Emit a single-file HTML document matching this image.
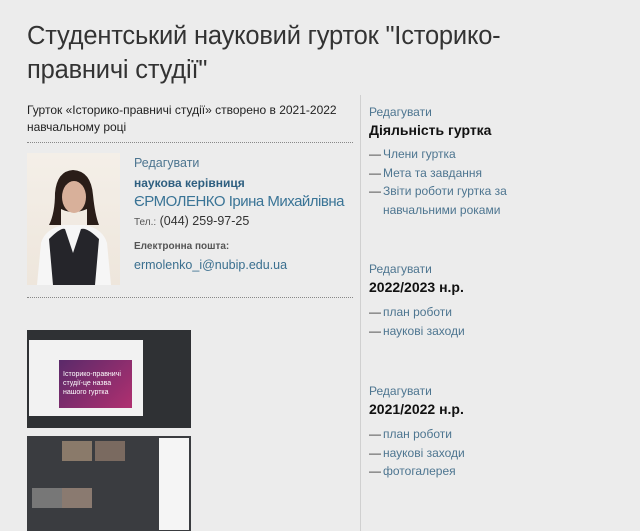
<!DOCTYPE html>
<html><head><meta charset="utf-8"><style>
body{margin:0;width:640px;height:531px;background:#ececec;font-family:"Liberation Sans",sans-serif;overflow:hidden;position:relative}
.a{position:absolute;white-space:nowrap}
h1{position:absolute;left:27px;top:19px;margin:0;font-weight:normal;font-size:25.5px;line-height:34px;color:#333;letter-spacing:-0.2px}
.dot{position:absolute;left:27px;width:326px;border-top:1px dotted #888}
.link{color:#4d7590;font-size:12px}
.r{position:absolute;left:369px}
.it{font-size:12px;color:#4d7590;line-height:18.5px}
.it>div{display:flex}
.it span{flex:0 0 14px;color:#333}
</style></head><body>
<h1>Студентський науковий гурток "Історико-<br>правничі студії"</h1>
<div class="a" style="left:27px;top:102px;font-size:12px;line-height:17px;color:#222;white-space:normal;width:330px">Гурток «Історико-правничі студії» створено в 2021-2022 навчальному році</div>
<div class="dot" style="top:142px"></div>
<div class="a" style="left:27px;top:153px;width:93px;height:132px;background:linear-gradient(#f4efe8,#eee6dc)">
<svg width="93" height="132" viewBox="0 0 93 132"><path d="M28 40 Q30 18 46 17 Q64 18 66 42 Q68 62 72 72 L60 72 L60 56 Q46 62 34 56 L34 72 L22 72 Q28 60 28 40Z" fill="#2a1d18"/><ellipse cx="47" cy="44" rx="12" ry="16" fill="#d8b09a"/><path d="M10 132 L14 90 Q18 76 36 72 L58 72 Q76 76 80 90 L84 132Z" fill="#f6f6f6"/><path d="M22 86 Q34 74 38 76 L46 100 L54 76 Q60 74 72 86 L68 132 L26 132Z" fill="#25252a"/></svg></div>
<div class="a link" style="left:134px;top:156px;font-size:12.5px">Редагувати</div>
<div class="a" style="left:134px;top:176px;font-size:12px;font-weight:bold;color:#2e5f80">наукова керівниця</div>
<div class="a" style="left:134px;top:193px;font-size:15px;color:#3a7496;letter-spacing:-0.5px">ЄРМОЛЕНКО Ірина Михайлівна</div>
<div class="a" style="left:134px;top:214px;font-size:12.5px;color:#333"><span style="font-size:10px;color:#555">Тел.:</span> (044) 259-97-25</div>
<div class="a" style="left:134px;top:241px;font-size:10px;color:#555;font-weight:bold">Електронна пошта:</div>
<div class="a" style="left:134px;top:258px;font-size:12.5px;color:#3a6f8f">ermolenko_i@nubip.edu.ua</div>
<div class="dot" style="top:297px"></div>
<div class="a" style="left:27px;top:330px;width:164px;height:98px;background:#2f3134">
<div style="position:absolute;left:2px;top:10px;width:114px;height:76px;background:#f2f2f2"></div>
<div style="position:absolute;left:32px;top:30px;width:73px;height:48px;background:linear-gradient(135deg,#5a2a6a,#b03070)"></div>
<div style="position:absolute;left:36px;top:40px;color:#fff;font-size:7px;line-height:9px;white-space:normal;width:60px">Історико-правничі студії-це назва нашого гуртка</div>
</div>
<div class="a" style="left:27px;top:436px;width:164px;height:95px;background:#3a3c40">
<div style="position:absolute;right:2px;top:2px;width:30px;height:92px;background:#f5f5f5"></div>
<div style="position:absolute;left:35px;top:5px;width:30px;height:20px;background:#8a7a6a"></div>
<div style="position:absolute;left:68px;top:5px;width:30px;height:20px;background:#7a6a60"></div>
<div style="position:absolute;left:5px;top:52px;width:30px;height:20px;background:#777"></div>
<div style="position:absolute;left:35px;top:52px;width:30px;height:20px;background:#8a7a70"></div>
</div>
<div style="position:absolute;left:360px;top:95px;width:1px;height:436px;background:#d0d0d0"></div>
<div class="r link" style="top:105px">Редагувати</div>
<div class="r" style="top:122px;font-size:14px;font-weight:bold;color:#111">Діяльність гуртка</div>
<div class="r it" style="top:145px;width:150px"><div><span>—</span>Члени гуртка</div><div><span>—</span>Мета та завдання</div><div><span>—</span><div>Звіти роботи гуртка за навчальними роками</div></div></div>
<div class="r link" style="top:262px">Редагувати</div>
<div class="r" style="top:279px;font-size:14px;font-weight:bold;color:#111">2022/2023 н.р.</div>
<div class="r it" style="top:303px"><div><span>—</span>план роботи</div><div><span>—</span>наукові заходи</div></div>
<div class="r link" style="top:384px">Редагувати</div>
<div class="r" style="top:401px;font-size:14px;font-weight:bold;color:#111">2021/2022 н.р.</div>
<div class="r it" style="top:425px"><div><span>—</span>план роботи</div><div><span>—</span>наукові заходи</div><div><span>—</span>фотогалерея</div></div>
</body></html>
